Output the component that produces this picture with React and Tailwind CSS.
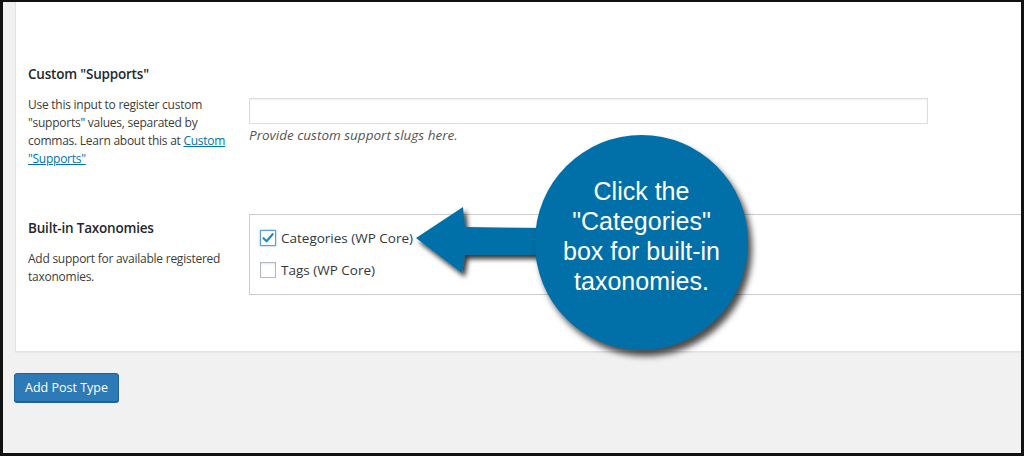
import React from "react";

export default function App() {
  const font = { fontFamily: '"Open Sans", "Noto Sans", Arial, sans-serif' };
  return (
    <div
      className="relative w-[1024px] h-[456px] overflow-hidden bg-[#f1f1f1] border-t-2 border-l-[3px] border-r-[3px] border-b-[3px] border-[#111] box-border"
      style={font}
    >
      <div className="flex flex-col pl-[12px]">
        {/* Panel */}
        <div className="h-[350px] bg-white border-b border-l border-[#e2e2e2] shadow-[0_1px_1px_rgba(0,0,0,0.04)] pl-[12px] flex flex-col">
          {/* Row 1 */}
          <div className="flex pt-[60px]">
            <div className="w-[221px] shrink-0">
              <div className="text-[13.5px] font-semibold tracking-[-0.2px] text-[#23282d] leading-[24px]">Custom "Supports"</div>
              <p className="mt-[10px] text-[12px] tracking-[-0.25px] leading-[18px] text-[#3c3c3c] w-[201px]">
                Use this input to register custom "supports" values, separated by commas. Learn about this at{" "}
                <a className="text-[#0073aa] underline">Custom "Supports"</a>
              </p>
            </div>
            <div className="flex flex-col pt-[36px]">
              <div className="w-[679px] h-[26px] border border-[#dddddd] bg-white shadow-[inset_0_1px_2px_rgba(0,0,0,0.07)]" />
              <div className="mt-[2px] text-[13.5px] italic text-[#555] leading-[18px]">Provide custom support slugs here.</div>
            </div>
          </div>
          {/* Row 2 */}
          <div className="flex mt-[46px]">
            <div className="w-[221px] shrink-0 pt-[2px]">
              <div className="text-[13.5px] font-semibold tracking-[-0.2px] text-[#23282d] leading-[24px]">Built-in Taxonomies</div>
              <p className="mt-[10px] text-[12px] tracking-[-0.25px] leading-[18px] text-[#3c3c3c] w-[201px]">
                Add support for available registered taxonomies.
              </p>
            </div>
            <div className="flex-1 h-[81px] border border-r-0 border-[#cccccc] pl-[10px] pt-[14px] flex flex-col gap-[14px]">
              <label className="flex items-center gap-[5px] text-[13.5px] text-[#32373c] leading-[18px]">
                <span className="w-[16px] h-[16px] border border-[#5b9dd9] bg-white flex items-center justify-center shadow-[0_0_2px_rgba(30,140,190,0.6)]">
                  <svg width="14" height="14" viewBox="0 0 14 14">
                    <path d="M2.5 7.2 L5.6 10.2 L11.6 3.2" fill="none" stroke="#1e8cbe" strokeWidth="2.2" strokeLinecap="round" strokeLinejoin="round" />
                  </svg>
                </span>
                Categories (WP Core)
              </label>
              <label className="flex items-center gap-[5px] text-[13.5px] text-[#32373c] leading-[18px]">
                <span className="w-[16px] h-[16px] border border-[#b4b9be] bg-white shadow-[inset_0_1px_2px_rgba(0,0,0,0.1)]" />
                Tags (WP Core)
              </label>
            </div>
          </div>
        </div>
        {/* Button */}
        <div className="pt-[21px] -ml-[1px]">
          <button className="h-[29px] px-[10px] rounded-[3px] bg-[#2e7ab6] border border-[#1f6398] text-white text-[12.5px] leading-[27px] shadow-[0_1px_0_#1f6398]">
            Add Post Type
          </button>
        </div>
      </div>

      {/* Arrow overlay */}
      <svg className="absolute" width="1024" height="456" style={{ left: -3, top: -2 }}>
        <defs>
          <filter id="sh" x="-20%" y="-20%" width="150%" height="150%">
            <feDropShadow dx="3" dy="4" stdDeviation="2.5" floodColor="#000" floodOpacity="0.8" />
          </filter>
        </defs>
        <polygon
          points="416,238 463,207 465,227 545,228 545,255 465,255 462,273"
          fill="#0270a8"
          filter="url(#sh)"
        />
      </svg>

      {/* Circle overlay */}
      <div
        className="absolute w-[213px] h-[215px] rounded-full bg-[#0270a8] flex flex-col items-center justify-center text-white text-[25px] leading-[30px] text-center shadow-[4px_6px_6px_rgba(0,0,0,0.7)]"
        style={{ left: 535 - 3, top: 135 - 2, fontFamily: '"Liberation Sans", Arial, sans-serif' }}
      >
        <div className="-mt-[14px]">Click the</div>
        <div>"Categories"</div>
        <div>box for built-in</div>
        <div>taxonomies.</div>
      </div>
    </div>
  );
}
